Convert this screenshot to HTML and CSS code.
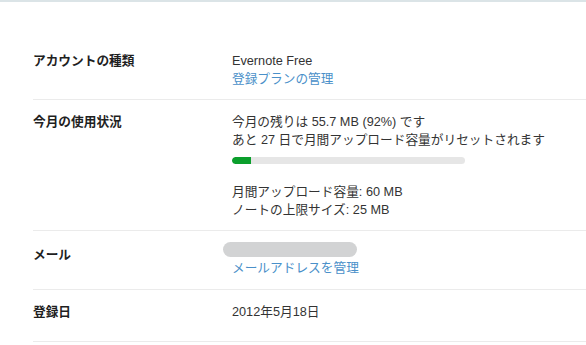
FILE: index.html
```html
<!DOCTYPE html>
<html lang="ja">
<head>
<meta charset="utf-8">
<title>アカウント</title>
<link rel="stylesheet" href="styles.css">
</head>
<body>
<div class="topline"></div>
<div class="settings">
  <div class="row row-type">
    <div class="label">アカウントの種類</div>
    <div class="value">
      <div>Evernote Free</div>
      <a class="link" href="#">登録プランの管理</a>
    </div>
  </div>
  <div class="row row-usage">
    <div class="label">今月の使用状況</div>
    <div class="value">
      <div>今月の残りは 55.7 MB (92%) です</div>
      <div>あと 27 日で月間アップロード容量がリセットされます</div>
      <div class="bar"><div class="bar-fill" style="width:8%"></div></div>
      <div>月間アップロード容量: 60 MB</div>
      <div>ノートの上限サイズ: 25 MB</div>
    </div>
  </div>
  <div class="row row-mail">
    <div class="label">メール</div>
    <div class="value">
      <div class="masked"><span class="pill"></span></div>
      <a class="link" href="#">メールアドレスを管理</a>
    </div>
  </div>
  <div class="row row-date">
    <div class="label">登録日</div>
    <div class="value">
      <div>2012年5月18日</div>
    </div>
  </div>
</div>
</body>
</html>
```
FILE: styles.css
```css
html, body {
  margin: 0;
  padding: 0;
  background: #ffffff;
}
body {
  font-family: "Liberation Sans", Arial, "Noto Sans CJK JP", sans-serif;
  font-size: 12.7px;
  line-height: 18px;
  color: #333333;
}
.topline {
  height: 2px;
  background: #dbe4e7;
}
.settings {
  padding: 50px 0 0 33px;
}
.row {
  display: flex;
  border-bottom: 1px solid #ebebeb;
}
.label {
  width: 199px;
  flex: none;
  font-weight: bold;
  color: #1f1f1f;
}
.value {
  flex: 1;
  color: #333333;
}
.link {
  display: block;
  color: #4a90c9;
  text-decoration: none;
}
.row-type {
  padding: 0 0 11px;
}
.row-usage {
  padding: 13px 0 11px;
}
.row-mail {
  padding: 10px 0 12px;
}
.row-mail .label {
  padding-top: 5px;
}
.row-date {
  padding: 13px 0 20px;
}
.bar {
  width: 233px;
  height: 7px;
  border-radius: 4px;
  background: #e6e6e6;
  margin: 8px 0 19px;
  overflow: hidden;
}
.bar-fill {
  height: 100%;
  background: #0b9f2c;
  border-radius: 4px 0 0 4px;
}
.masked {
  height: 18px;
  position: relative;
}
.pill {
  position: absolute;
  left: -9px;
  top: 1px;
  width: 134px;
  height: 15px;
  border-radius: 8px;
  background: #d2d3d4;
}
```
